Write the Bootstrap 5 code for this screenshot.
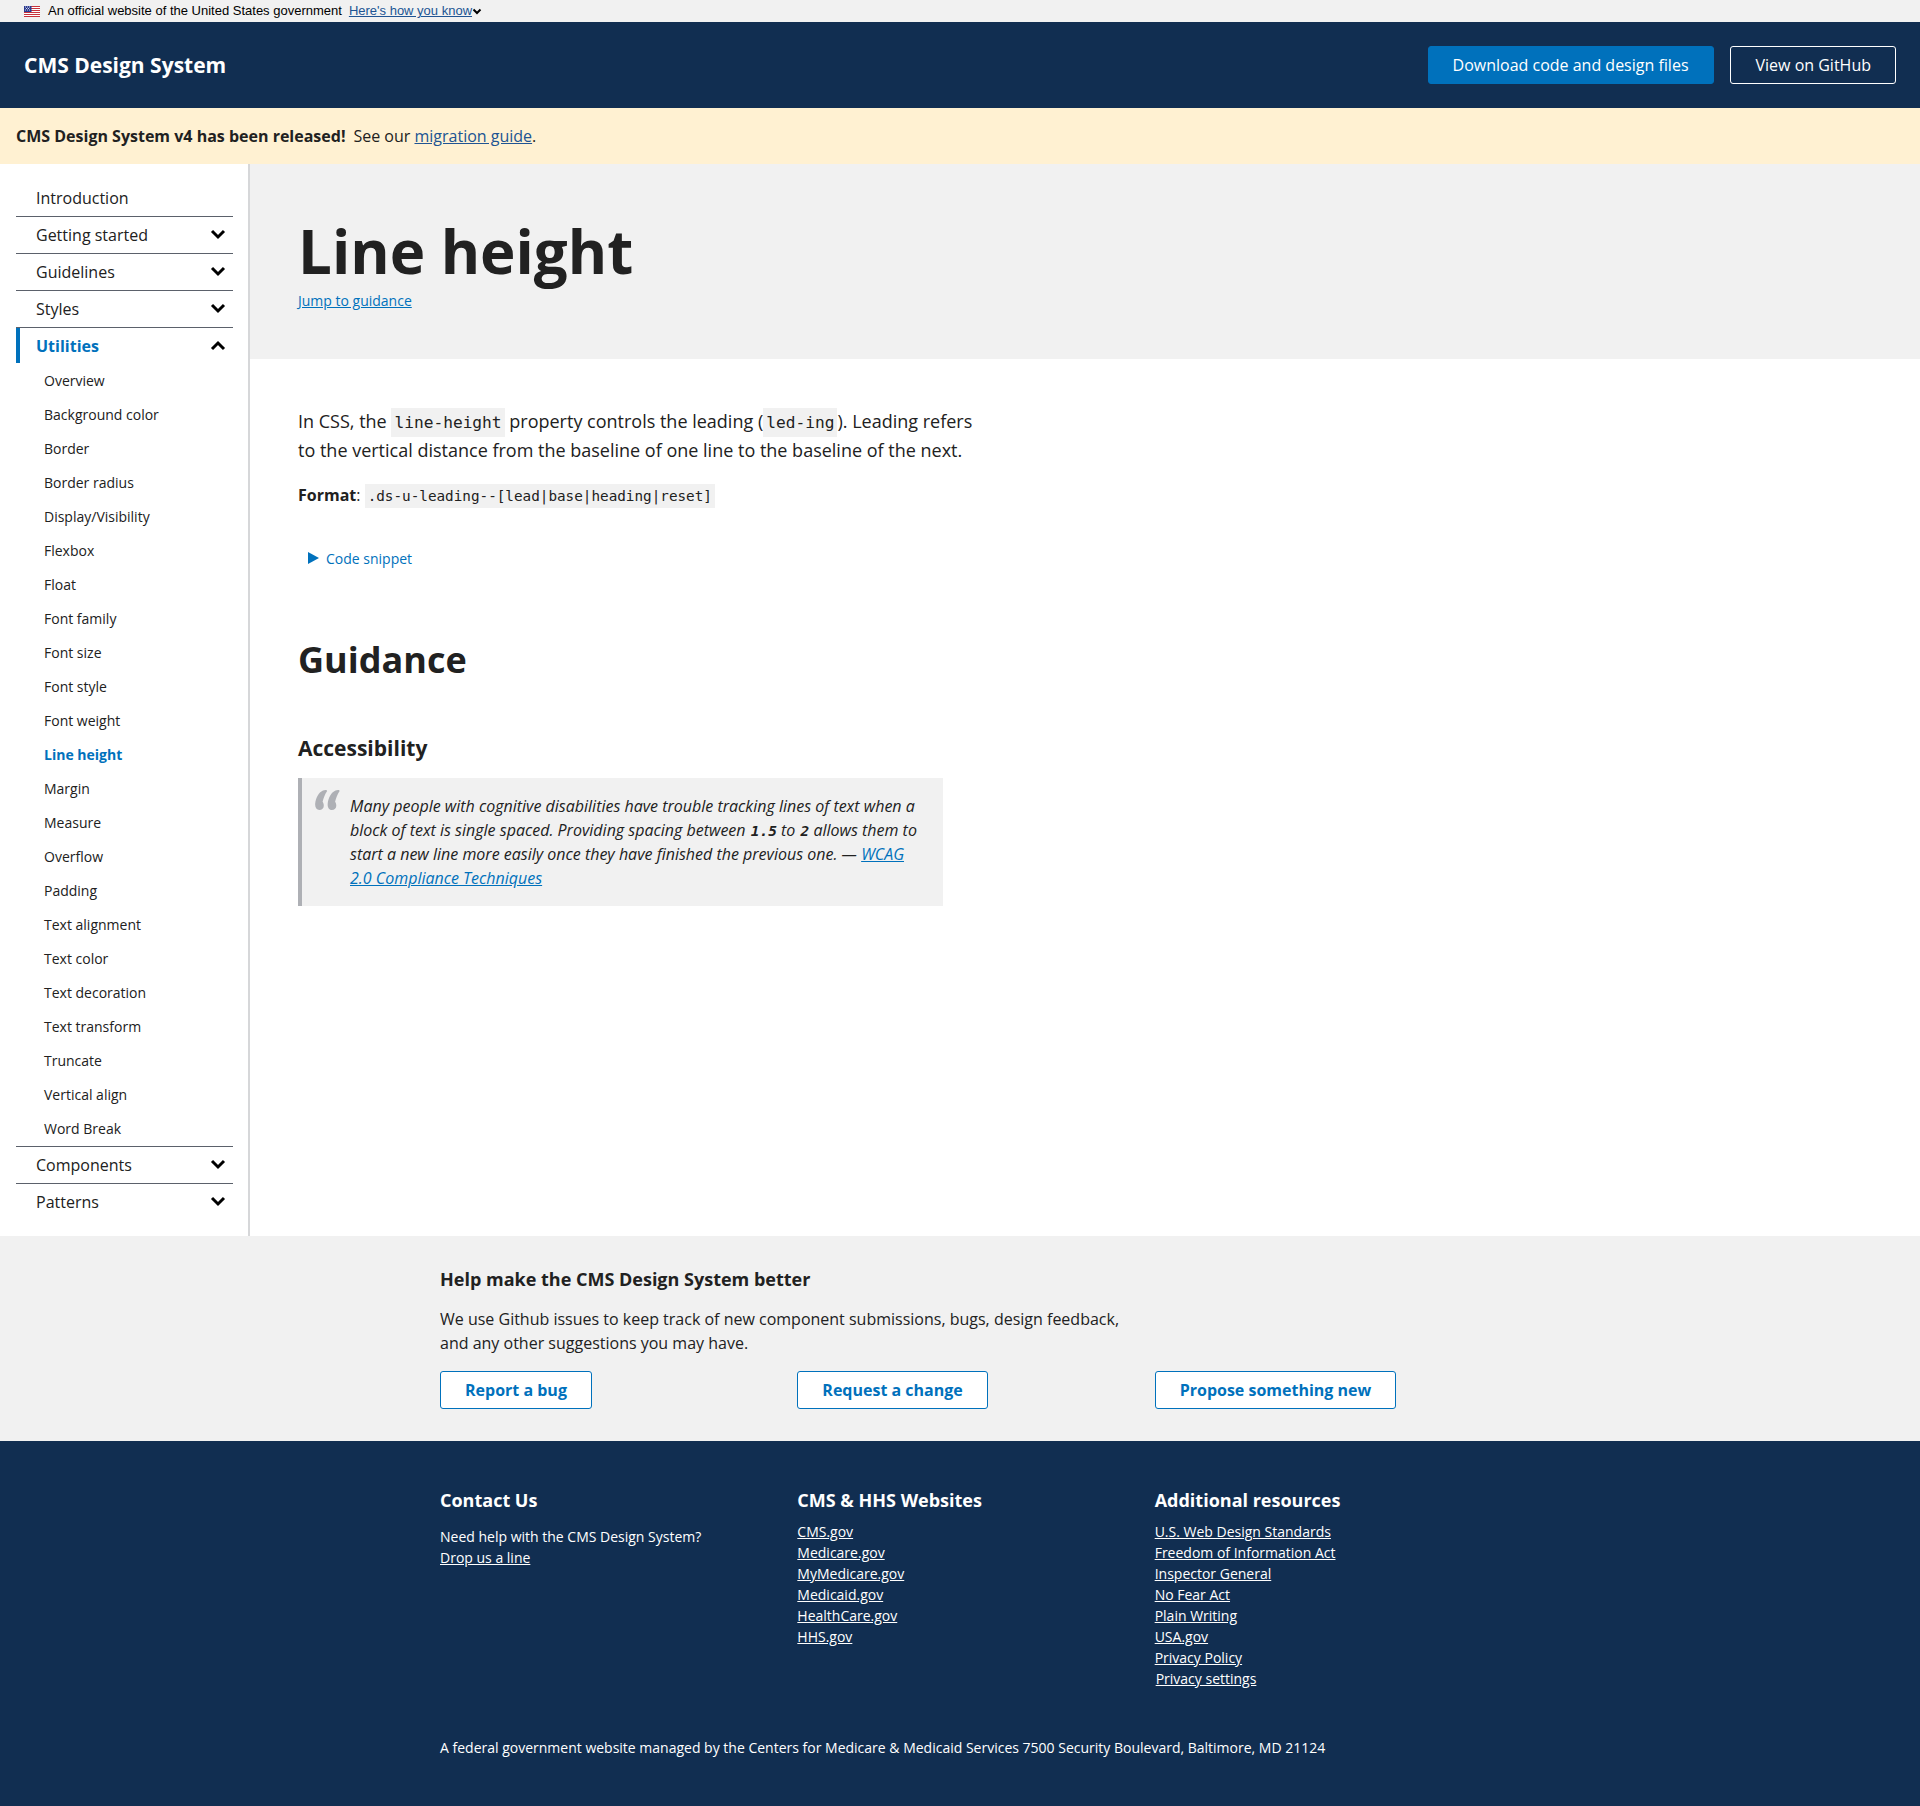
<!DOCTYPE html>
<html lang="en">

<head>
    <meta charset="UTF-8">
    <meta name="viewport" content="width=device-width, initial-scale=1">
    <title>Line height - CMS Design System</title>
    <link href="https://cdn.jsdelivr.net/npm/bootstrap@5.3.0/dist/css/bootstrap.min.css" rel="stylesheet">
    <script src="https://cdn.jsdelivr.net/npm/bootstrap@5.3.0/dist/js/bootstrap.bundle.min.js"></script>
    <style>
        body {
            font-family: "Open Sans", sans-serif;
            color: #212121;
            font-size: 16px;
        }

        a {
            color: #0071bc;
        }

        code {
            font-family: "DejaVu Sans Mono", monospace;
            color: #212121;
            background: #f1f1f1;
            line-height: 1;
        }

        .gov-bar {
            height: 22px;
            background: #f1f1f1;
            padding-left: 24px;
            font-family: "Liberation Sans", sans-serif;
            font-size: 13px;
            color: #000;
        }

        .gov-bar svg.flag {
            margin-right: 8px;
        }

        .gov-bar a {
            color: #205493;
            margin-left: 7px;
        }

        .site-head {
            height: 86px;
            background: #112e51;
            padding: 0 24px;
        }

        .site-name {
            color: #fff;
            font-size: 21px;
            font-weight: 700;
            padding-top: 1px;
        }

        .head-btn {
            height: 38px;
            padding: 0 24px;
            font-size: 16px;
            border-radius: 3px;
            color: #fff;
            display: flex;
            align-items: center;
        }

        .head-btn.solid {
            background: #0071bc;
            border: 1px solid #0071bc;
        }

        .head-btn.ghost {
            border: 1px solid #fff;
            padding-left: 25px;
        }

        .notice {
            height: 56px;
            background: #fff1d2;
            padding-left: 16px;
        }

        .notice a {
            color: #205493;
        }

        .side {
            width: 250px;
            flex: none;
            border-right: 2px solid #d6d7d9;
            padding: 15px 15px 16px 16px;
        }

        .side-top {
            height: 37px;
            padding: 0 6px 0 20px;
            color: #212121;
            text-decoration: none;
            border-top: 1px solid #5b616b;
        }

        .side-top svg {
            margin-right: 1px;
            margin-top: -1px;
        }

        .side-top.first {
            border-top: 0;
        }

        .side-top.open {
            height: 36px;
            color: #0071bc;
            font-weight: 700;
            box-shadow: inset 4px 0 0 #0071bc;
        }

        .side-sub {
            height: 34px;
            padding-left: 28px;
            font-size: 14px;
            color: #212121;
            text-decoration: none;
        }

        .side-sub.here {
            color: #0071bc;
            font-weight: 700;
        }

        .side-sub.last {
            height: 35px;
            padding-bottom: 1px;
        }

        .hero {
            height: 195px;
            background: #f1f1f1;
            padding: 48px 48px 0;
        }

        .hero h1 {
            font-size: 60px;
            font-weight: 700;
            line-height: 78px;
            margin: 0;
        }

        .hero a {
            font-size: 14px;
            display: block;
        }

        .body-area {
            padding: 48px 48px 0;
        }

        .intro {
            width: 680px;
            font-size: 18px;
            line-height: 29px;
            margin: 0 0 18px;
        }

        .intro code {
            font-size: 16.2px;
            padding: 5px 3px;
        }

        .fmt {
            margin: 0;
            height: 24px;
        }

        .fmt code {
            font-size: 14.3px;
            padding: 4px 3px;
        }

        .snippet {
            margin: 39px 0 0 10px;
            font-size: 14px;
            color: #0071bc;
            height: 24px;
        }

        .snippet svg {
            margin-right: 7px;
        }

        .body-area h2 {
            font-size: 36px;
            font-weight: 700;
            margin: 65px 0 0;
            line-height: 50px;
        }

        .body-area h3 {
            font-size: 21px;
            font-weight: 700;
            margin: 49px 0 0;
            line-height: 28px;
        }

        .quote-box {
            width: 645px;
            margin: 16px 0 0;
            padding: 16px 18px 16px 12px;
            background: #f1f1f1;
            border-left: 4px solid #aeb0b5;
            font-size: 16px;
            line-height: 24px;
            font-style: italic;
        }

        .quote-mark {
            width: 36px;
            flex: none;
        }

        .quote-mark svg {
            display: block;
            margin: -4px 0 0 1px;
        }

        .quote-box code {
            background: none;
            font-size: 14.5px;
            font-weight: 700;
            padding: 0 0 0 1px;
        }

        .help-band {
            height: 205px;
            background: #f1f1f1;
            padding-top: 29px;
        }

        .wrap-mid {
            width: 1072px;
            margin-left: 440px;
        }

        .help-band h4 {
            font-size: 18px;
            font-weight: 700;
            line-height: 28px;
            margin: 0 0 14px;
        }

        .help-band p {
            width: 690px;
            line-height: 24px;
            margin: 0 0 16px;
        }

        .help-btn {
            height: 38px;
            padding: 0 24px;
            background: #fff;
            border: 1px solid #0071bc;
            color: #0071bc;
            border-radius: 3px;
            font-weight: 700;
            display: inline-flex;
            align-items: center;
        }

        .help-btn:hover {
            color: #0071bc;
            border-color: #0071bc;
            background: #fff;
        }

        .foot {
            height: 365px;
            background: #112e51;
            color: #fff;
            padding-top: 46px;
            font-size: 14px;
            line-height: 21px;
        }

        .foot h5 {
            font-size: 18px;
            font-weight: 700;
            line-height: 26px;
            margin: 0 0 8px;
        }

        .foot h5.tight {
            margin-bottom: 13px;
        }

        .foot a {
            color: #fff;
            display: block;
        }

        .foot a.privacy-btn {
            margin-left: 1px;
        }

        .foot-note {
            margin: 0;
            padding-top: 48px;
        }
    </style>
</head>

<body>
    <div class="gov-bar d-flex align-items-center">
        <svg class="flag" width="16" height="11" viewBox="0 0 16 11">
            <rect width="16" height="11" fill="#fff" />
            <path d="M0 .5h16M0 2.5h16M0 4.5h16M0 6.5h16M0 8.5h16M0 10.5h16" stroke="#c8323c" stroke-width="1" />
            <rect width="7.5" height="6" fill="#2b3a8f" />
            <path d="M1 1h1M3 1h1M5 1h1M2 2.5h1M4 2.5h1M1 4h1M3 4h1M5 4h1" stroke="#fff" stroke-width=".8" />
        </svg>
        <span>An official website of the United States government</span>
        <a href="#">Here's how you know</a>
        <svg width="10" height="7" viewBox="0 0 10 7"><path d="M1.500 1.500 5 5l3.500-3.500" fill="none" stroke="#000" stroke-width="2" /></svg>
    </div>

    <header class="site-head d-flex align-items-center justify-content-between">
        <span class="site-name">CMS Design System</span>
        <div class="d-flex gap-3">
            <a class="head-btn solid text-decoration-none" href="#">Download code and design files</a>
            <a class="head-btn ghost text-decoration-none" href="#">View on GitHub</a>
        </div>
    </header>

    <div class="notice d-flex align-items-center">
        <strong class="me-2">CMS Design System v4 has been released!</strong>
        <span>See our <a href="#">migration guide</a>.</span>
    </div>

    <div class="d-flex">
        <nav class="side">
            <a class="side-top first d-flex align-items-center" href="#">Introduction</a>
            <a class="side-top d-flex align-items-center justify-content-between" href="#">Getting started
                <svg width="16" height="11" viewBox="0 0 16 11"><path d="M2 2l6 6 6-6" fill="none" stroke="#000" stroke-width="3" /></svg></a>
            <a class="side-top d-flex align-items-center justify-content-between" href="#">Guidelines
                <svg width="16" height="11" viewBox="0 0 16 11"><path d="M2 2l6 6 6-6" fill="none" stroke="#000" stroke-width="3" /></svg></a>
            <a class="side-top d-flex align-items-center justify-content-between" href="#">Styles
                <svg width="16" height="11" viewBox="0 0 16 11"><path d="M2 2l6 6 6-6" fill="none" stroke="#000" stroke-width="3" /></svg></a>
            <a class="side-top open d-flex align-items-center justify-content-between" href="#">Utilities
                <svg width="16" height="11" viewBox="0 0 16 11"><path d="M2 9l6-6 6 6" fill="none" stroke="#000" stroke-width="3" /></svg></a>
            <a class="side-sub d-flex align-items-center" href="#">Overview</a>
            <a class="side-sub d-flex align-items-center" href="#">Background color</a>
            <a class="side-sub d-flex align-items-center" href="#">Border</a>
            <a class="side-sub d-flex align-items-center" href="#">Border radius</a>
            <a class="side-sub d-flex align-items-center" href="#">Display/Visibility</a>
            <a class="side-sub d-flex align-items-center" href="#">Flexbox</a>
            <a class="side-sub d-flex align-items-center" href="#">Float</a>
            <a class="side-sub d-flex align-items-center" href="#">Font family</a>
            <a class="side-sub d-flex align-items-center" href="#">Font size</a>
            <a class="side-sub d-flex align-items-center" href="#">Font style</a>
            <a class="side-sub d-flex align-items-center" href="#">Font weight</a>
            <a class="side-sub here d-flex align-items-center" href="#">Line height</a>
            <a class="side-sub d-flex align-items-center" href="#">Margin</a>
            <a class="side-sub d-flex align-items-center" href="#">Measure</a>
            <a class="side-sub d-flex align-items-center" href="#">Overflow</a>
            <a class="side-sub d-flex align-items-center" href="#">Padding</a>
            <a class="side-sub d-flex align-items-center" href="#">Text alignment</a>
            <a class="side-sub d-flex align-items-center" href="#">Text color</a>
            <a class="side-sub d-flex align-items-center" href="#">Text decoration</a>
            <a class="side-sub d-flex align-items-center" href="#">Text transform</a>
            <a class="side-sub d-flex align-items-center" href="#">Truncate</a>
            <a class="side-sub d-flex align-items-center" href="#">Vertical align</a>
            <a class="side-sub last d-flex align-items-center" href="#">Word Break</a>
            <a class="side-top d-flex align-items-center justify-content-between" href="#">Components
                <svg width="16" height="11" viewBox="0 0 16 11"><path d="M2 2l6 6 6-6" fill="none" stroke="#000" stroke-width="3" /></svg></a>
            <a class="side-top d-flex align-items-center justify-content-between" href="#">Patterns
                <svg width="16" height="11" viewBox="0 0 16 11"><path d="M2 2l6 6 6-6" fill="none" stroke="#000" stroke-width="3" /></svg></a>
        </nav>

        <main class="flex-grow-1">
            <div class="hero">
                <h1>Line height</h1>
                <a href="#">Jump to guidance</a>
            </div>
            <div class="body-area">
                <p class="intro">In CSS, the <code>line-height</code> property controls the leading (<code>led-ing</code>). Leading refers to the vertical distance from the baseline of one line to the baseline of the next.</p>
                <p class="fmt"><strong>Format</strong>: <code>.ds-u-leading--[lead|base|heading|reset]</code></p>
                <div class="snippet d-flex align-items-center">
                    <svg width="11" height="12" viewBox="0 0 11 12"><path d="M0 0l11 6-11 6z" fill="#0071bc" /></svg>
                    Code snippet
                </div>
                <h2>Guidance</h2>
                <h3>Accessibility</h3>
                <blockquote class="quote-box d-flex">
                    <span class="quote-mark">
                        <svg width="25" height="20" viewBox="0 0 25 20">
                            <path d="M8 0.500C3.500 2.500 .8 8 .2 13.500-.2 17.500 1.600 20 4.300 20c2.700 0 4.500-1.800 4.500-4.200 0-1.800-.5-3-1.200-4C8.500 8 10 4 12 1.200 12.300.4 11.500 0 10.500 0c-.8 0-1.700.2-2.500.5z" fill="#aeb0b5" />
                            <path d="M20.500 0.500C16 2.500 13.300 8 12.700 13.500 12.300 17.500 14.100 20 16.800 20c2.700 0 4.500-1.800 4.500-4.200 0-1.800-.5-3-1.200-4C21 8 22.500 4 24.500 1.200 24.800.4 24 0 23 0c-.8 0-1.700.2-2.500.5z" fill="#aeb0b5" />
                        </svg>
                    </span>
                    <span>Many people with cognitive disabilities have trouble tracking lines of text when a block of text is single spaced. Providing spacing between <code>1.5</code> to <code>2</code> allows them to start a new line more easily once they have finished the previous one. — <a href="#">WCAG 2.0 Compliance Techniques</a></span>
                </blockquote>
            </div>
        </main>
    </div>

    <section class="help-band">
        <div class="wrap-mid">
            <h4>Help make the CMS Design System better</h4>
            <p>We use Github issues to keep track of new component submissions, bugs, design feedback, and any other suggestions you may have.</p>
            <div class="row g-0">
                <div class="col-4"><a class="btn help-btn" href="#">Report a bug</a></div>
                <div class="col-4"><a class="btn help-btn" href="#">Request a change</a></div>
                <div class="col-4"><a class="btn help-btn" href="#">Propose something new</a></div>
            </div>
        </div>
    </section>

    <footer class="foot">
        <div class="wrap-mid">
            <div class="row g-0">
                <div class="col-4">
                    <h5 class="tight">Contact Us</h5>
                    <div>Need help with the CMS Design System?</div>
                    <a href="#">Drop us a line</a>
                </div>
                <div class="col-4">
                    <h5>CMS &amp; HHS Websites</h5>
                    <a href="#">CMS.gov</a>
                    <a href="#">Medicare.gov</a>
                    <a href="#">MyMedicare.gov</a>
                    <a href="#">Medicaid.gov</a>
                    <a href="#">HealthCare.gov</a>
                    <a href="#">HHS.gov</a>
                </div>
                <div class="col-4">
                    <h5>Additional resources</h5>
                    <a href="#">U.S. Web Design Standards</a>
                    <a href="#">Freedom of Information Act</a>
                    <a href="#">Inspector General</a>
                    <a href="#">No Fear Act</a>
                    <a href="#">Plain Writing</a>
                    <a href="#">USA.gov</a>
                    <a href="#">Privacy Policy</a>
                    <a href="#" class="privacy-btn">Privacy settings</a>
                </div>
            </div>
            <p class="foot-note">A federal government website managed by the Centers for Medicare &amp; Medicaid Services 7500 Security Boulevard, Baltimore, MD 21124</p>
        </div>
    </footer>
</body>

</html>
